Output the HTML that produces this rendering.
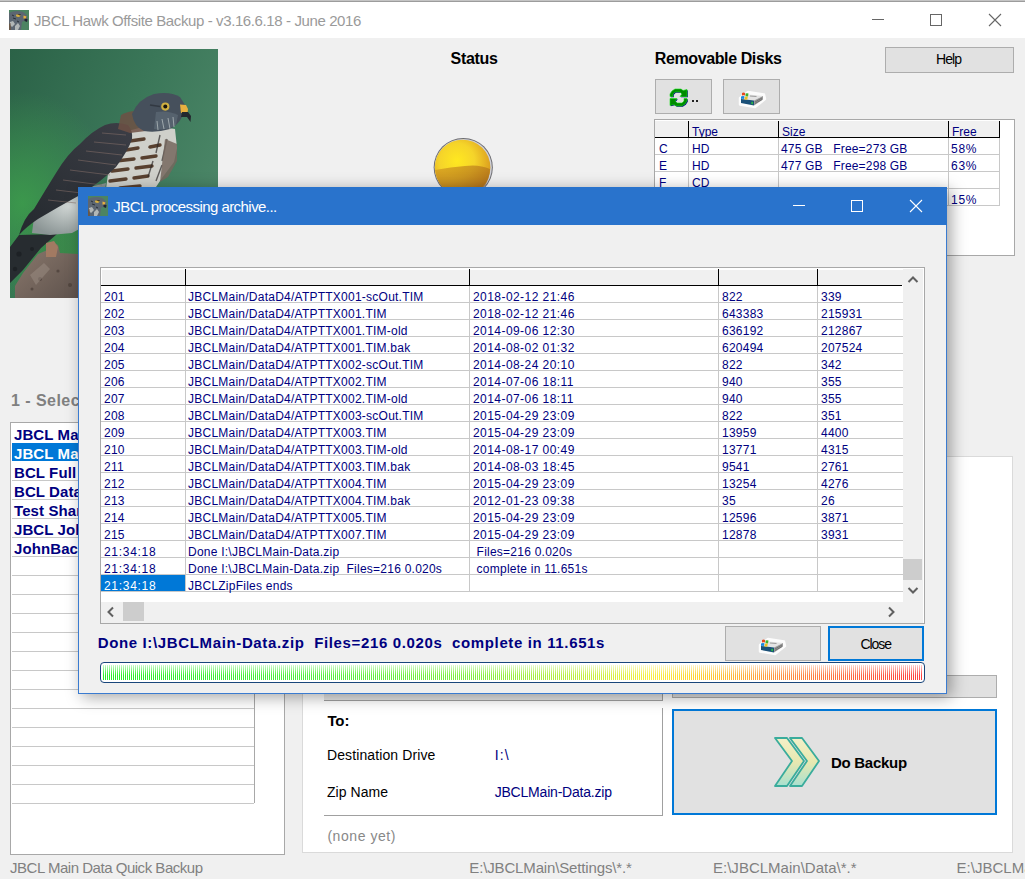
<!DOCTYPE html>
<html><head><meta charset="utf-8">
<style>
*{margin:0;padding:0;box-sizing:border-box}
html,body{width:1025px;height:879px;overflow:hidden;background:#f0f0f0;font-family:"Liberation Sans",sans-serif;position:relative}
.a{position:absolute}
.t{position:absolute;white-space:pre;line-height:1}
</style></head><body>
<div class="a" style="left:0px;top:0px;width:1025px;height:1px;background:#c4c4c4"></div>
<div class="a" style="left:0px;top:1px;width:1025px;height:1px;background:#9c9c9c"></div>
<div class="a" style="left:0px;top:2px;width:1025px;height:36px;background:#fff"></div>
<div class="t" style="left:34.00px;top:13.00px;font-size:15px;color:#9a9a9a;letter-spacing:-0.389px;">JBCL Hawk Offsite Backup - v3.16.6.18 - June 2016</div>
<svg class="a" style="left:9px;top:10px" width="20" height="20"><rect width="20" height="20" fill="#4c8462"/><path d="M0 3 Q5 0.5 11 1.2 Q16 2 18 6 L19 11 L15 11 L13 12 L12 20 L0 20Z" fill="#5c6672"/><path d="M1 12 L4 11 L6 14 L3 17 L1 15Z M6 16 L9 13 L11 16 L9 20 L6 20Z" fill="#c8ccc8" opacity="0.8"/><path d="M0 14 L1.5 13 L2 20 L0 20Z" fill="#6a5848"/><path d="M4 8 L7 9 M8 11 L10 12 M3 5 L5 6" stroke="#2a3038" stroke-width="1"/><ellipse cx="9.2" cy="5.6" rx="2.3" ry="1.3" fill="#d8b040"/><path d="M8 4 L12 4.5 L11 5.5Z" fill="#1a1a1a"/><path d="M14.5 5.5 L17.5 6.5 L16.5 9 L14.5 8.5Z" fill="#e8b040"/><path d="M15.5 8.5 L18.5 9 L18 12 L15.5 11Z" fill="#1e2430"/></svg>
<div class="a" style="left:872px;top:19px;width:12px;height:1px;background:#666"></div>
<div class="a" style="left:930px;top:14px;width:12px;height:12px;border:1px solid #666"></div>
<svg class="a" style="left:988px;top:13px" width="14" height="14"><path d="M1 1L13 13M13 1L1 13" stroke="#666" stroke-width="1.1"/></svg>
<svg class="a" style="left:10px;top:49px" width="208" height="249" viewBox="0 0 208 249">
<defs>
<linearGradient id="hg" x1="0" y1="0" x2="1" y2="0.5"><stop offset="0" stop-color="#2b6247"/><stop offset="0.55" stop-color="#3a7658"/><stop offset="1" stop-color="#4a8566"/></linearGradient>
<radialGradient id="hg2" cx="0.06" cy="0.62" r="0.45"><stop offset="0" stop-color="#3c9a4c" stop-opacity="0.95"/><stop offset="1" stop-color="#3c9a4c" stop-opacity="0"/></radialGradient>
<radialGradient id="hg4" cx="0.28" cy="0.85" r="0.3"><stop offset="0" stop-color="#3a8a46" stop-opacity="0.8"/><stop offset="1" stop-color="#3a8a46" stop-opacity="0"/></radialGradient>
<linearGradient id="wg" x1="1" y1="0" x2="0" y2="1"><stop offset="0" stop-color="#3c3e46"/><stop offset="1" stop-color="#24292e"/></linearGradient>
<linearGradient id="br" x1="0" y1="0" x2="1" y2="1"><stop offset="0" stop-color="#8c7a6e"/><stop offset="1" stop-color="#5e524c"/></linearGradient>
<radialGradient id="bel" cx="0.5" cy="0.45" r="0.6"><stop offset="0" stop-color="#d0d6d4"/><stop offset="1" stop-color="#8a9494"/></radialGradient>
</defs>
<rect width="208" height="249" fill="url(#hg)"/>
<rect width="208" height="249" fill="url(#hg2)"/>
<rect width="208" height="249" fill="url(#hg4)"/>
<!-- tail -->
<path d="M0 198 L9 186 L47 185 L31 199 L13 221 L0 234Z" fill="#272c30"/>
<g fill="#15181b" opacity="0.5"><circle cx="9" cy="205" r="2.6"/><circle cx="22" cy="200" r="2"/><circle cx="5" cy="220" r="2.2"/></g>
<!-- belly/flank -->
<path d="M24 168 Q34 152 56 146 L80 138 L96 134 L92 158 Q80 176 62 184 L40 186 L22 184Z" fill="url(#bel)"/>
<!-- chest -->
<path d="M118 82 L140 76 L165 80 L167 99 L164 113 L152 129 L146 138 L118 142 L96 140 L100 110Z" fill="#cfd0ca"/>
<g stroke="#58402f" stroke-width="3.4" fill="none" stroke-linecap="round">
<path d="M120 92 L134 90"/><path d="M110 102 L128 99"/><path d="M140 98 L150 96"/><path d="M106 112 L124 110"/><path d="M132 109 L146 107"/><path d="M102 122 L118 120"/><path d="M126 119 L142 117"/><path d="M100 132 L116 130"/><path d="M124 129 L138 127"/><path d="M110 139 L130 137"/>
</g>
<g stroke="#2e2a2a" stroke-width="1.4" fill="none" opacity="0.7">
<path d="M150 86 L146 104"/><path d="M157 90 L152 112"/><path d="M143 112 L138 128"/><path d="M152 116 L146 132"/>
</g>
<path d="M155 90 L167 95 L167 112 L158 128 L150 133 Z" fill="#76675e" opacity="0.85"/>
<!-- wing -->
<path d="M95 76 Q106 72 118 76 Q123 82 122 90 Q118 102 106 118 Q92 132 70 146 Q48 158 28 170 Q16 178 9 186 Q14 168 24 160 Q36 140 46 124 Q58 104 70 95 Q82 82 95 76Z" fill="url(#wg)"/>
<g stroke="#86706a" stroke-width="1" opacity="0.55">
<path d="M92 84 L116 86"/><path d="M84 93 L116 96"/><path d="M76 102 L112 106"/><path d="M68 111 L106 116"/><path d="M60 121 L100 126"/><path d="M53 131 L92 136"/><path d="M46 141 L80 145"/><path d="M38 151 L66 154"/>
</g>
<!-- nape -->
<path d="M111 66 Q122 60 132 63 L136 82 L120 84 L108 80Z" fill="#6e5044" opacity="0.85"/>
<!-- head -->
<path d="M122 65 Q128 50 144 45 Q160 42 170 48 L175 56 L172 68 Q168 76 160 80 Q146 84 134 82 Q124 78 122 65Z" fill="#46505c"/>
<path d="M146 63 Q158 61 168 66 L166 76 Q156 82 144 80Z" fill="#56626e"/>
<g stroke="#c8d0d0" stroke-width="0.9" opacity="0.7"><path d="M152 70 L154 80"/><path d="M158 69 L160 80"/><path d="M147 72 L148 81"/><path d="M163 68 L164 78"/></g>
<path d="M140 56 L150 57.5" stroke="#2a3038" stroke-width="1.6" opacity="0.7"/>
<circle cx="155.3" cy="57.6" r="4.1" fill="#d0b040"/><circle cx="155.3" cy="57.6" r="2" fill="#18140e"/>
<path d="M170 55.5 L176 56 L178 60 L177.5 64 L171 64Z" fill="#e8b040"/>
<path d="M172 63 L178 63 L181 67 L180.5 73 L177 68 L171 68Z" fill="#23282e"/>
<!-- branch -->
<path d="M5 249 L5 237 L13 224 L28 205 L40 200 L42 193 L48 196 L50 204 L68 205 L68 249Z" fill="url(#br)"/>
<path d="M36 194 L44 192 L48 198 L46 208 L36 208Z" fill="#a27a62"/>
<g fill="#4a3e38" opacity="0.7"><circle cx="30" cy="230" r="2"/><circle cx="48" cy="222" r="1.6"/><circle cx="22" cy="240" r="1.5"/><circle cx="60" cy="236" r="2"/></g>
<path d="M20 226 L34 214 L40 220 L26 236Z" fill="#9c8e84" opacity="0.5"/>
</svg>

<div class="t" style="left:450.60px;top:51.00px;font-size:16px;color:#000;font-weight:bold;letter-spacing:-0.312px;">Status</div>
<svg class="a" style="left:431px;top:136px" width="64" height="64"><defs>
<radialGradient id="bl" cx="0.4" cy="0.38" r="0.7"><stop offset="0" stop-color="#ffe820"/><stop offset="0.45" stop-color="#f5d42a"/><stop offset="0.8" stop-color="#e0a820"/><stop offset="1" stop-color="#c89020"/></radialGradient>
<linearGradient id="bs" x1="0" y1="0" x2="1" y2="1"><stop offset="0" stop-color="#d8a020"/><stop offset="1" stop-color="#9a5818"/></linearGradient></defs>
<circle cx="32.25" cy="31.5" r="29.6" fill="#6c6c70"/><circle cx="32.25" cy="31.5" r="28.6" fill="#d0d0d8"/><circle cx="31.6" cy="31.5" r="27.8" fill="url(#bl)"/>
<path d="M4 34 Q20 31 34 30 Q48 28 59 33 Q58 50 46 57 Q32 62 18 57 Q6 50 4 34Z" fill="url(#bs)" opacity="0.75"/></svg>
<div class="t" style="left:654.80px;top:51.00px;font-size:16px;color:#000;font-weight:bold;letter-spacing:-0.391px;">Removable Disks</div>
<div class="a" style="left:885px;top:47px;width:129px;height:26px;background:#e1e1e1;border:1px solid #adadad"></div>
<div class="t" style="left:936.00px;top:52.00px;font-size:14px;color:#000;letter-spacing:-0.947px;">Help</div>
<div class="a" style="left:655px;top:79px;width:57px;height:35px;background:#e1e1e1;border:1px solid #adadad"></div>
<div class="a" style="left:723px;top:79px;width:57px;height:35px;background:#e1e1e1;border:1px solid #adadad"></div>
<svg class="a" style="left:669px;top:88px" width="20" height="20" viewBox="0 0 20 20">
<g transform="translate(0.8,0.8)" fill="#000080">
<path d="M1,8.5 L1,6 L3,3 L6,1 L12,1 L14,2.5 L18,1.5 L18,8.5 L11,8.5 L13,6 L11,4 L6,4 L4,6 L4,8.5 Z"/>
<path d="M18,10.5 L18,13 L16,16 L13,18 L7,18 L5,16.5 L1,17.5 L1,10.5 L8,10.5 L6,13 L8,15 L13,15 L15,13 L15,10.5 Z"/></g>
<g fill="#008a00" stroke="#10e010" stroke-width="0.6">
<path d="M1,8.5 L1,6 L3,3 L6,1 L12,1 L14,2.5 L18,1.5 L18,8.5 L11,8.5 L13,6 L11,4 L6,4 L4,6 L4,8.5 Z"/>
<path d="M18,10.5 L18,13 L16,16 L13,18 L7,18 L5,16.5 L1,17.5 L1,10.5 L8,10.5 L6,13 L8,15 L13,15 L15,13 L15,10.5 Z"/></g>
</svg>
<div class="a" style="left:692px;top:100px;width:2px;height:2px;background:#222"></div>
<div class="a" style="left:696px;top:100px;width:2px;height:2px;background:#222"></div>
<svg class="a" style="left:735px;top:88px" width="35" height="24" viewBox="0 0 35 24">
<path d="M5 10 L13 4 L29 6.5 L30 11 L20 19 L5 16.5Z" fill="#fff" stroke="#fff" stroke-width="2.5" stroke-linejoin="round" opacity="0.9"/>
<path d="M14 6.5 L28 8 L19 12.5 L6 11Z" fill="#e4e4e4"/>
<path d="M15 7.5 L22 8 L21 9 L15 8.5Z" fill="#707070" opacity="0.6"/>
<path d="M6 11 L19 12.5 L19 17.5 L6 15Z" fill="#1a5078"/>
<path d="M19 12.5 L28 8 L28 11.5 L19 17.5Z" fill="#9a9a9a"/>
<path d="M20 14 L27 10 M20 15.5 L27 11.5" stroke="#555" stroke-width="0.6"/>
<rect x="16.5" y="13.8" width="1.2" height="2.4" fill="#30e030"/>
<path d="M7 5 Q8.5 4 10 5 L10 7.5 Q8.5 6.8 7 7.5Z" fill="#e84820"/>
<path d="M10.5 5.5 Q12 4.8 13.5 5.5 L13 8.5 Q11.5 8 10.5 8.5Z" fill="#40b030"/>
<path d="M6 8.5 Q7.5 7.5 9.5 8.2 L9 11 Q7.5 10.5 6 11Z" fill="#1a88e0"/>
<path d="M9.8 9 Q11.2 8.3 12.8 8.8 L12.2 11.8 Q10.8 11.2 9.5 11.8Z" fill="#f0c020"/>
</svg>
<div class="a" style="left:654px;top:119px;width:361px;height:137px;background:#fff;border:1px solid #a8a8a8"></div>
<div class="a" style="left:655px;top:121px;width:344px;height:16px;background:#f0f0f0"></div>
<div class="a" style="left:655px;top:137px;width:344px;height:1px;background:#000"></div>
<div class="a" style="left:688px;top:121px;width:1px;height:17px;background:#000"></div>
<div class="a" style="left:778px;top:121px;width:1px;height:17px;background:#000"></div>
<div class="a" style="left:948px;top:121px;width:1px;height:17px;background:#000"></div>
<div class="a" style="left:999px;top:121px;width:1px;height:17px;background:#000"></div>
<div class="a" style="left:655px;top:154px;width:344px;height:1px;background:#c8c8c8"></div>
<div class="a" style="left:655px;top:171px;width:344px;height:1px;background:#c8c8c8"></div>
<div class="a" style="left:655px;top:188px;width:344px;height:1px;background:#c8c8c8"></div>
<div class="a" style="left:655px;top:205px;width:344px;height:1px;background:#c8c8c8"></div>
<div class="a" style="left:688px;top:138px;width:1px;height:68px;background:#c8c8c8"></div>
<div class="a" style="left:778px;top:138px;width:1px;height:68px;background:#c8c8c8"></div>
<div class="a" style="left:948px;top:138px;width:1px;height:68px;background:#c8c8c8"></div>
<div class="a" style="left:999px;top:138px;width:1px;height:68px;background:#c8c8c8"></div>
<div class="a" style="left:655px;top:121px;width:344px;height:16px;overflow:hidden">
<div class="t" style="left:37.00px;top:5.00px;font-size:12px;color:#000080;">Type</div>
<div class="t" style="left:127.00px;top:5.00px;font-size:12px;color:#000080;">Size</div>
<div class="t" style="left:297.00px;top:5.00px;font-size:12px;color:#000080;">Free</div>
</div>
<div class="t" style="left:659.00px;top:143.00px;font-size:12px;color:#000080;">C</div>
<div class="t" style="left:692.00px;top:143.00px;font-size:12px;color:#000080;">HD</div>
<div class="t" style="left:781.00px;top:143.00px;font-size:12px;color:#000080;letter-spacing:0.173px;">475 GB   Free=273 GB</div>
<div class="t" style="left:951.00px;top:143.00px;font-size:12px;color:#000080;letter-spacing:0.750px;">58%</div>
<div class="t" style="left:659.00px;top:160.00px;font-size:12px;color:#000080;">E</div>
<div class="t" style="left:692.00px;top:160.00px;font-size:12px;color:#000080;">HD</div>
<div class="t" style="left:781.00px;top:160.00px;font-size:12px;color:#000080;letter-spacing:0.173px;">477 GB   Free=298 GB</div>
<div class="t" style="left:951.00px;top:160.00px;font-size:12px;color:#000080;letter-spacing:0.750px;">63%</div>
<div class="t" style="left:659.00px;top:177.00px;font-size:12px;color:#000080;">F</div>
<div class="t" style="left:692.00px;top:177.00px;font-size:12px;color:#000080;">CD</div>
<div class="t" style="left:951.00px;top:194.00px;font-size:12px;color:#000080;letter-spacing:0.750px;">15%</div>
<div class="t" style="left:11.00px;top:393.00px;font-size:16px;color:#808080;font-weight:bold;letter-spacing:0.450px;">1 - Select</div>
<div class="a" style="left:10px;top:422px;width:275px;height:433px;background:#fff;border:1px solid #a8a8a8"></div>
<div class="a" style="left:254px;top:423px;width:1px;height:380px;background:#a8a8a8"></div>
<div class="a" style="left:12px;top:480px;width:242px;height:1px;background:#c8c8c8"></div>
<div class="a" style="left:12px;top:499px;width:242px;height:1px;background:#c8c8c8"></div>
<div class="a" style="left:12px;top:518px;width:242px;height:1px;background:#c8c8c8"></div>
<div class="a" style="left:12px;top:537px;width:242px;height:1px;background:#c8c8c8"></div>
<div class="a" style="left:12px;top:556px;width:242px;height:1px;background:#c8c8c8"></div>
<div class="a" style="left:12px;top:575px;width:242px;height:1px;background:#c8c8c8"></div>
<div class="a" style="left:12px;top:594px;width:242px;height:1px;background:#c8c8c8"></div>
<div class="a" style="left:12px;top:613px;width:242px;height:1px;background:#c8c8c8"></div>
<div class="a" style="left:12px;top:632px;width:242px;height:1px;background:#c8c8c8"></div>
<div class="a" style="left:12px;top:651px;width:242px;height:1px;background:#c8c8c8"></div>
<div class="a" style="left:12px;top:670px;width:242px;height:1px;background:#c8c8c8"></div>
<div class="a" style="left:12px;top:689px;width:242px;height:1px;background:#c8c8c8"></div>
<div class="a" style="left:12px;top:708px;width:242px;height:1px;background:#c8c8c8"></div>
<div class="a" style="left:12px;top:727px;width:242px;height:1px;background:#c8c8c8"></div>
<div class="a" style="left:12px;top:746px;width:242px;height:1px;background:#c8c8c8"></div>
<div class="a" style="left:12px;top:765px;width:242px;height:1px;background:#c8c8c8"></div>
<div class="a" style="left:12px;top:784px;width:242px;height:1px;background:#c8c8c8"></div>
<div class="a" style="left:12px;top:803px;width:242px;height:1px;background:#c8c8c8"></div>
<div class="a" style="left:12px;top:443px;width:242px;height:18px;background:#0078d7"></div>
<div class="t" style="left:14.00px;top:427.00px;font-size:15px;color:#000080;font-weight:bold;letter-spacing:0.100px;">JBCL Main Data Quick Backup</div>
<div class="t" style="left:14.00px;top:446.00px;font-size:15px;color:#fff;font-weight:bold;letter-spacing:0.100px;">JBCL Main Data Full</div>
<div class="t" style="left:14.00px;top:465.00px;font-size:15px;color:#000080;font-weight:bold;letter-spacing:0.100px;">BCL Full Backup</div>
<div class="t" style="left:14.00px;top:484.00px;font-size:15px;color:#000080;font-weight:bold;letter-spacing:0.100px;">BCL Data</div>
<div class="t" style="left:14.00px;top:503.00px;font-size:15px;color:#000080;font-weight:bold;letter-spacing:0.100px;">Test Share</div>
<div class="t" style="left:14.00px;top:522.00px;font-size:15px;color:#000080;font-weight:bold;letter-spacing:0.100px;">JBCL John</div>
<div class="t" style="left:14.00px;top:541.00px;font-size:15px;color:#000080;font-weight:bold;letter-spacing:0.100px;">JohnBackup</div>
<div class="a" style="left:302px;top:456px;width:711px;height:397px;background:#fff;border:1px solid #dadada"></div>
<div class="a" style="left:324px;top:692px;width:339px;height:9px;background:#e8e8e8;border-bottom:1px solid #a0a0a0;border-right:1px solid #a0a0a0"></div>
<div class="a" style="left:672px;top:675px;width:325px;height:23px;background:#e1e1e1;border:1px solid #adadad"></div>
<div class="a" style="left:324px;top:708px;width:339px;height:108px;background:#fff;border-bottom:1px solid #a0a0a0;border-right:1px solid #a0a0a0"></div>
<div class="t" style="left:327.40px;top:713.00px;font-size:15px;color:#000;font-weight:bold;letter-spacing:-0.100px;">To:</div>
<div class="t" style="left:327.00px;top:748.00px;font-size:14px;color:#000;letter-spacing:0.110px;">Destination Drive</div>
<div class="t" style="left:494.70px;top:748.00px;font-size:14px;color:#000080;letter-spacing:1.200px;">I:\</div>
<div class="t" style="left:327.00px;top:785.00px;font-size:14px;color:#000;letter-spacing:0.054px;">Zip Name</div>
<div class="t" style="left:494.70px;top:785.00px;font-size:14px;color:#000080;letter-spacing:-0.203px;">JBCLMain-Data.zip</div>
<div class="t" style="left:327.40px;top:829.00px;font-size:14px;color:#888;letter-spacing:0.556px;">(none yet)</div>
<div class="a" style="left:672px;top:709px;width:325px;height:106px;background:#e1e1e1;border:2px solid #0078d7"></div>
<svg class="a" style="left:770px;top:734px" width="56" height="56" viewBox="0 0 56 56">
<defs><linearGradient id="cg" x1="0" y1="0" x2="0" y2="1"><stop offset="0" stop-color="#f4f0c8"/><stop offset="0.5" stop-color="#e8e8b0"/><stop offset="1" stop-color="#a8e0d0"/></linearGradient></defs>
<path d="M5 4 L17 4 L34 27 L17 52 L5 52 L22 27Z" fill="url(#cg)" stroke="#3aac9c" stroke-width="1.8" stroke-linejoin="round"/>
<path d="M20 4 L32 4 L49 27 L32 52 L20 52 L37 27Z" fill="url(#cg)" stroke="#3aac9c" stroke-width="1.8" stroke-linejoin="round"/></svg>
<div class="t" style="left:831.00px;top:755.00px;font-size:15px;color:#000;font-weight:bold;letter-spacing:-0.287px;">Do Backup</div>
<div class="t" style="left:10.00px;top:860.00px;font-size:15px;color:#808080;letter-spacing:-0.475px;">JBCL Main Data Quick Backup</div>
<div class="t" style="left:469.30px;top:860.00px;font-size:15px;color:#808080;letter-spacing:-0.148px;">E:\JBCLMain\Settings\*.*</div>
<div class="t" style="left:713.00px;top:860.00px;font-size:15px;color:#808080;letter-spacing:0.011px;">E:\JBCLMain\Data\*.*</div>
<div class="t" style="left:956.60px;top:860.00px;font-size:15px;color:#808080;letter-spacing:0.011px;">E:\JBCLMain\Data</div>
<div class="a" style="left:78px;top:187px;width:869px;height:507px;background:#f0f0f0;border:1px solid #3a7bd0;box-shadow:4px 3px 15px rgba(0,0,0,0.36)"></div>
<div class="a" style="left:78px;top:187px;width:869px;height:38px;background:#2973cc"></div>
<svg class="a" style="left:88px;top:196px" width="20" height="20"><rect width="20" height="20" fill="#4c8462"/><path d="M0 3 Q5 0.5 11 1.2 Q16 2 18 6 L19 11 L15 11 L13 12 L12 20 L0 20Z" fill="#5c6672"/><path d="M1 12 L4 11 L6 14 L3 17 L1 15Z M6 16 L9 13 L11 16 L9 20 L6 20Z" fill="#c8ccc8" opacity="0.8"/><path d="M0 14 L1.5 13 L2 20 L0 20Z" fill="#6a5848"/><path d="M4 8 L7 9 M8 11 L10 12 M3 5 L5 6" stroke="#2a3038" stroke-width="1"/><ellipse cx="9.2" cy="5.6" rx="2.3" ry="1.3" fill="#d8b040"/><path d="M8 4 L12 4.5 L11 5.5Z" fill="#1a1a1a"/><path d="M14.5 5.5 L17.5 6.5 L16.5 9 L14.5 8.5Z" fill="#e8b040"/><path d="M15.5 8.5 L18.5 9 L18 12 L15.5 11Z" fill="#1e2430"/></svg>
<div class="t" style="left:113.30px;top:199.00px;font-size:15px;color:#fff;letter-spacing:-0.556px;">JBCL processing archive...</div>
<div class="a" style="left:793px;top:205px;width:12px;height:1px;background:#fff"></div>
<div class="a" style="left:851px;top:200px;width:12px;height:12px;border:1px solid #fff"></div>
<svg class="a" style="left:909px;top:199px" width="14" height="14"><path d="M1 1L13 13M13 1L1 13" stroke="#fff" stroke-width="1.1"/></svg>
<div class="a" style="left:100px;top:267px;width:825px;height:357px;background:#fff;border:1px solid #a8a8a8"></div>
<div class="a" style="left:102px;top:270px;width:801px;height:15px;background:#f0f0f0"></div>
<div class="a" style="left:101px;top:285px;width:801px;height:1px;background:#000"></div>
<div class="a" style="left:185px;top:269px;width:1px;height:16px;background:#000"></div>
<div class="a" style="left:185px;top:286px;width:1px;height:306px;background:#c8c8c8"></div>
<div class="a" style="left:469px;top:269px;width:1px;height:16px;background:#000"></div>
<div class="a" style="left:469px;top:286px;width:1px;height:306px;background:#c8c8c8"></div>
<div class="a" style="left:718px;top:269px;width:1px;height:16px;background:#000"></div>
<div class="a" style="left:718px;top:286px;width:1px;height:306px;background:#c8c8c8"></div>
<div class="a" style="left:817px;top:269px;width:1px;height:16px;background:#000"></div>
<div class="a" style="left:817px;top:286px;width:1px;height:306px;background:#c8c8c8"></div>
<div class="a" style="left:101px;top:302px;width:802px;height:1px;background:#c8c8c8"></div>
<div class="a" style="left:101px;top:319px;width:802px;height:1px;background:#c8c8c8"></div>
<div class="a" style="left:101px;top:336px;width:802px;height:1px;background:#c8c8c8"></div>
<div class="a" style="left:101px;top:353px;width:802px;height:1px;background:#c8c8c8"></div>
<div class="a" style="left:101px;top:370px;width:802px;height:1px;background:#c8c8c8"></div>
<div class="a" style="left:101px;top:387px;width:802px;height:1px;background:#c8c8c8"></div>
<div class="a" style="left:101px;top:404px;width:802px;height:1px;background:#c8c8c8"></div>
<div class="a" style="left:101px;top:421px;width:802px;height:1px;background:#c8c8c8"></div>
<div class="a" style="left:101px;top:438px;width:802px;height:1px;background:#c8c8c8"></div>
<div class="a" style="left:101px;top:455px;width:802px;height:1px;background:#c8c8c8"></div>
<div class="a" style="left:101px;top:472px;width:802px;height:1px;background:#c8c8c8"></div>
<div class="a" style="left:101px;top:489px;width:802px;height:1px;background:#c8c8c8"></div>
<div class="a" style="left:101px;top:506px;width:802px;height:1px;background:#c8c8c8"></div>
<div class="a" style="left:101px;top:523px;width:802px;height:1px;background:#c8c8c8"></div>
<div class="a" style="left:101px;top:540px;width:802px;height:1px;background:#c8c8c8"></div>
<div class="a" style="left:101px;top:557px;width:802px;height:1px;background:#c8c8c8"></div>
<div class="a" style="left:101px;top:574px;width:802px;height:1px;background:#c8c8c8"></div>
<div class="a" style="left:101px;top:591px;width:802px;height:1px;background:#c8c8c8"></div>
<div class="a" style="left:101px;top:575px;width:84px;height:16px;background:#0078d7"></div>
<div class="t" style="left:104.00px;top:291.00px;font-size:12px;color:#000080;letter-spacing:0.240px;">201</div>
<div class="t" style="left:188.00px;top:291.00px;font-size:12px;color:#000080;letter-spacing:0.240px;">JBCLMain/DataD4/ATPTTX001-scOut.TIM</div>
<div class="t" style="left:473.00px;top:291.00px;font-size:12px;color:#000080;letter-spacing:0.440px;">2018-02-12 21:46</div>
<div class="t" style="left:722.00px;top:291.00px;font-size:12px;color:#000080;letter-spacing:0.240px;">822</div>
<div class="t" style="left:821.00px;top:291.00px;font-size:12px;color:#000080;letter-spacing:0.240px;">339</div>
<div class="t" style="left:104.00px;top:308.00px;font-size:12px;color:#000080;letter-spacing:0.240px;">202</div>
<div class="t" style="left:188.00px;top:308.00px;font-size:12px;color:#000080;letter-spacing:0.240px;">JBCLMain/DataD4/ATPTTX001.TIM</div>
<div class="t" style="left:473.00px;top:308.00px;font-size:12px;color:#000080;letter-spacing:0.440px;">2018-02-12 21:46</div>
<div class="t" style="left:722.00px;top:308.00px;font-size:12px;color:#000080;letter-spacing:0.240px;">643383</div>
<div class="t" style="left:821.00px;top:308.00px;font-size:12px;color:#000080;letter-spacing:0.240px;">215931</div>
<div class="t" style="left:104.00px;top:325.00px;font-size:12px;color:#000080;letter-spacing:0.240px;">203</div>
<div class="t" style="left:188.00px;top:325.00px;font-size:12px;color:#000080;letter-spacing:0.240px;">JBCLMain/DataD4/ATPTTX001.TIM-old</div>
<div class="t" style="left:473.00px;top:325.00px;font-size:12px;color:#000080;letter-spacing:0.440px;">2014-09-06 12:30</div>
<div class="t" style="left:722.00px;top:325.00px;font-size:12px;color:#000080;letter-spacing:0.240px;">636192</div>
<div class="t" style="left:821.00px;top:325.00px;font-size:12px;color:#000080;letter-spacing:0.240px;">212867</div>
<div class="t" style="left:104.00px;top:342.00px;font-size:12px;color:#000080;letter-spacing:0.240px;">204</div>
<div class="t" style="left:188.00px;top:342.00px;font-size:12px;color:#000080;letter-spacing:0.240px;">JBCLMain/DataD4/ATPTTX001.TIM.bak</div>
<div class="t" style="left:473.00px;top:342.00px;font-size:12px;color:#000080;letter-spacing:0.440px;">2014-08-02 01:32</div>
<div class="t" style="left:722.00px;top:342.00px;font-size:12px;color:#000080;letter-spacing:0.240px;">620494</div>
<div class="t" style="left:821.00px;top:342.00px;font-size:12px;color:#000080;letter-spacing:0.240px;">207524</div>
<div class="t" style="left:104.00px;top:359.00px;font-size:12px;color:#000080;letter-spacing:0.240px;">205</div>
<div class="t" style="left:188.00px;top:359.00px;font-size:12px;color:#000080;letter-spacing:0.240px;">JBCLMain/DataD4/ATPTTX002-scOut.TIM</div>
<div class="t" style="left:473.00px;top:359.00px;font-size:12px;color:#000080;letter-spacing:0.440px;">2014-08-24 20:10</div>
<div class="t" style="left:722.00px;top:359.00px;font-size:12px;color:#000080;letter-spacing:0.240px;">822</div>
<div class="t" style="left:821.00px;top:359.00px;font-size:12px;color:#000080;letter-spacing:0.240px;">342</div>
<div class="t" style="left:104.00px;top:376.00px;font-size:12px;color:#000080;letter-spacing:0.240px;">206</div>
<div class="t" style="left:188.00px;top:376.00px;font-size:12px;color:#000080;letter-spacing:0.240px;">JBCLMain/DataD4/ATPTTX002.TIM</div>
<div class="t" style="left:473.00px;top:376.00px;font-size:12px;color:#000080;letter-spacing:0.440px;">2014-07-06 18:11</div>
<div class="t" style="left:722.00px;top:376.00px;font-size:12px;color:#000080;letter-spacing:0.240px;">940</div>
<div class="t" style="left:821.00px;top:376.00px;font-size:12px;color:#000080;letter-spacing:0.240px;">355</div>
<div class="t" style="left:104.00px;top:393.00px;font-size:12px;color:#000080;letter-spacing:0.240px;">207</div>
<div class="t" style="left:188.00px;top:393.00px;font-size:12px;color:#000080;letter-spacing:0.240px;">JBCLMain/DataD4/ATPTTX002.TIM-old</div>
<div class="t" style="left:473.00px;top:393.00px;font-size:12px;color:#000080;letter-spacing:0.440px;">2014-07-06 18:11</div>
<div class="t" style="left:722.00px;top:393.00px;font-size:12px;color:#000080;letter-spacing:0.240px;">940</div>
<div class="t" style="left:821.00px;top:393.00px;font-size:12px;color:#000080;letter-spacing:0.240px;">355</div>
<div class="t" style="left:104.00px;top:410.00px;font-size:12px;color:#000080;letter-spacing:0.240px;">208</div>
<div class="t" style="left:188.00px;top:410.00px;font-size:12px;color:#000080;letter-spacing:0.240px;">JBCLMain/DataD4/ATPTTX003-scOut.TIM</div>
<div class="t" style="left:473.00px;top:410.00px;font-size:12px;color:#000080;letter-spacing:0.440px;">2015-04-29 23:09</div>
<div class="t" style="left:722.00px;top:410.00px;font-size:12px;color:#000080;letter-spacing:0.240px;">822</div>
<div class="t" style="left:821.00px;top:410.00px;font-size:12px;color:#000080;letter-spacing:0.240px;">351</div>
<div class="t" style="left:104.00px;top:427.00px;font-size:12px;color:#000080;letter-spacing:0.240px;">209</div>
<div class="t" style="left:188.00px;top:427.00px;font-size:12px;color:#000080;letter-spacing:0.240px;">JBCLMain/DataD4/ATPTTX003.TIM</div>
<div class="t" style="left:473.00px;top:427.00px;font-size:12px;color:#000080;letter-spacing:0.440px;">2015-04-29 23:09</div>
<div class="t" style="left:722.00px;top:427.00px;font-size:12px;color:#000080;letter-spacing:0.240px;">13959</div>
<div class="t" style="left:821.00px;top:427.00px;font-size:12px;color:#000080;letter-spacing:0.240px;">4400</div>
<div class="t" style="left:104.00px;top:444.00px;font-size:12px;color:#000080;letter-spacing:0.240px;">210</div>
<div class="t" style="left:188.00px;top:444.00px;font-size:12px;color:#000080;letter-spacing:0.240px;">JBCLMain/DataD4/ATPTTX003.TIM-old</div>
<div class="t" style="left:473.00px;top:444.00px;font-size:12px;color:#000080;letter-spacing:0.440px;">2014-08-17 00:49</div>
<div class="t" style="left:722.00px;top:444.00px;font-size:12px;color:#000080;letter-spacing:0.240px;">13771</div>
<div class="t" style="left:821.00px;top:444.00px;font-size:12px;color:#000080;letter-spacing:0.240px;">4315</div>
<div class="t" style="left:104.00px;top:461.00px;font-size:12px;color:#000080;letter-spacing:0.240px;">211</div>
<div class="t" style="left:188.00px;top:461.00px;font-size:12px;color:#000080;letter-spacing:0.240px;">JBCLMain/DataD4/ATPTTX003.TIM.bak</div>
<div class="t" style="left:473.00px;top:461.00px;font-size:12px;color:#000080;letter-spacing:0.440px;">2014-08-03 18:45</div>
<div class="t" style="left:722.00px;top:461.00px;font-size:12px;color:#000080;letter-spacing:0.240px;">9541</div>
<div class="t" style="left:821.00px;top:461.00px;font-size:12px;color:#000080;letter-spacing:0.240px;">2761</div>
<div class="t" style="left:104.00px;top:478.00px;font-size:12px;color:#000080;letter-spacing:0.240px;">212</div>
<div class="t" style="left:188.00px;top:478.00px;font-size:12px;color:#000080;letter-spacing:0.240px;">JBCLMain/DataD4/ATPTTX004.TIM</div>
<div class="t" style="left:473.00px;top:478.00px;font-size:12px;color:#000080;letter-spacing:0.440px;">2015-04-29 23:09</div>
<div class="t" style="left:722.00px;top:478.00px;font-size:12px;color:#000080;letter-spacing:0.240px;">13254</div>
<div class="t" style="left:821.00px;top:478.00px;font-size:12px;color:#000080;letter-spacing:0.240px;">4276</div>
<div class="t" style="left:104.00px;top:495.00px;font-size:12px;color:#000080;letter-spacing:0.240px;">213</div>
<div class="t" style="left:188.00px;top:495.00px;font-size:12px;color:#000080;letter-spacing:0.240px;">JBCLMain/DataD4/ATPTTX004.TIM.bak</div>
<div class="t" style="left:473.00px;top:495.00px;font-size:12px;color:#000080;letter-spacing:0.440px;">2012-01-23 09:38</div>
<div class="t" style="left:722.00px;top:495.00px;font-size:12px;color:#000080;letter-spacing:0.240px;">35</div>
<div class="t" style="left:821.00px;top:495.00px;font-size:12px;color:#000080;letter-spacing:0.240px;">26</div>
<div class="t" style="left:104.00px;top:512.00px;font-size:12px;color:#000080;letter-spacing:0.240px;">214</div>
<div class="t" style="left:188.00px;top:512.00px;font-size:12px;color:#000080;letter-spacing:0.240px;">JBCLMain/DataD4/ATPTTX005.TIM</div>
<div class="t" style="left:473.00px;top:512.00px;font-size:12px;color:#000080;letter-spacing:0.440px;">2015-04-29 23:09</div>
<div class="t" style="left:722.00px;top:512.00px;font-size:12px;color:#000080;letter-spacing:0.240px;">12596</div>
<div class="t" style="left:821.00px;top:512.00px;font-size:12px;color:#000080;letter-spacing:0.240px;">3871</div>
<div class="t" style="left:104.00px;top:529.00px;font-size:12px;color:#000080;letter-spacing:0.240px;">215</div>
<div class="t" style="left:188.00px;top:529.00px;font-size:12px;color:#000080;letter-spacing:0.240px;">JBCLMain/DataD4/ATPTTX007.TIM</div>
<div class="t" style="left:473.00px;top:529.00px;font-size:12px;color:#000080;letter-spacing:0.440px;">2015-04-29 23:09</div>
<div class="t" style="left:722.00px;top:529.00px;font-size:12px;color:#000080;letter-spacing:0.240px;">12878</div>
<div class="t" style="left:821.00px;top:529.00px;font-size:12px;color:#000080;letter-spacing:0.240px;">3931</div>
<div class="t" style="left:104.00px;top:546.00px;font-size:12px;color:#000080;letter-spacing:0.700px;">21:34:18</div>
<div class="t" style="left:188.00px;top:546.00px;font-size:12px;color:#000080;letter-spacing:0.240px;">Done I:\JBCLMain-Data.zip</div>
<div class="t" style="left:473.00px;top:546.00px;font-size:12px;color:#000080;letter-spacing:0.240px;"> Files=216 0.020s</div>
<div class="t" style="left:104.00px;top:563.00px;font-size:12px;color:#000080;letter-spacing:0.700px;">21:34:18</div>
<div class="t" style="left:188.00px;top:563.00px;font-size:12px;color:#000080;letter-spacing:0.240px;">Done I:\JBCLMain-Data.zip  Files=216 0.020s</div>
<div class="t" style="left:473.00px;top:563.00px;font-size:12px;color:#000080;letter-spacing:0.240px;"> complete in 11.651s</div>
<div class="t" style="left:104.00px;top:580.00px;font-size:12px;color:#fff;letter-spacing:0.700px;">21:34:18</div>
<div class="t" style="left:188.00px;top:580.00px;font-size:12px;color:#000080;letter-spacing:0.240px;">JBCLZipFiles ends</div>
<div class="a" style="left:903px;top:269px;width:20px;height:333px;background:#f0f0f0"></div>
<div class="a" style="left:101px;top:602px;width:822px;height:21px;background:#f0f0f0"></div>
<div class="a" style="left:903px;top:559px;width:19px;height:21px;background:#cdcdcd"></div>
<div class="a" style="left:123px;top:602px;width:21px;height:19px;background:#cdcdcd"></div>
<svg class="a" style="left:906px;top:275px" width="14" height="10"><path d="M2.5 7 L7 2.5 L11.5 7" fill="none" stroke="#606060" stroke-width="2"/></svg>
<svg class="a" style="left:906px;top:585px" width="14" height="10"><path d="M2.5 3 L7 7.5 L11.5 3" fill="none" stroke="#606060" stroke-width="2"/></svg>
<svg class="a" style="left:106px;top:605px" width="10" height="14"><path d="M7 2.5 L2.5 7 L7 11.5" fill="none" stroke="#606060" stroke-width="2"/></svg>
<svg class="a" style="left:886px;top:605px" width="10" height="14"><path d="M3 2.5 L7.5 7 L3 11.5" fill="none" stroke="#606060" stroke-width="2"/></svg>
<div class="t" style="left:97.70px;top:635.00px;font-size:15px;color:#000080;font-weight:bold;letter-spacing:0.640px;">Done I:\JBCLMain-Data.zip  Files=216 0.020s  complete in 11.651s</div>
<div class="a" style="left:725px;top:626px;width:96px;height:35px;background:#e1e1e1;border:1px solid #adadad"></div>
<svg class="a" style="left:755px;top:635px" width="35" height="24" viewBox="0 0 35 24">
<path d="M5 10 L13 4 L29 6.5 L30 11 L20 19 L5 16.5Z" fill="#fff" stroke="#fff" stroke-width="2.5" stroke-linejoin="round" opacity="0.9"/>
<path d="M14 6.5 L28 8 L19 12.5 L6 11Z" fill="#e4e4e4"/>
<path d="M15 7.5 L22 8 L21 9 L15 8.5Z" fill="#707070" opacity="0.6"/>
<path d="M6 11 L19 12.5 L19 17.5 L6 15Z" fill="#1a5078"/>
<path d="M19 12.5 L28 8 L28 11.5 L19 17.5Z" fill="#9a9a9a"/>
<path d="M20 14 L27 10 M20 15.5 L27 11.5" stroke="#555" stroke-width="0.6"/>
<rect x="16.5" y="13.8" width="1.2" height="2.4" fill="#30e030"/>
<path d="M7 5 Q8.5 4 10 5 L10 7.5 Q8.5 6.8 7 7.5Z" fill="#e84820"/>
<path d="M10.5 5.5 Q12 4.8 13.5 5.5 L13 8.5 Q11.5 8 10.5 8.5Z" fill="#40b030"/>
<path d="M6 8.5 Q7.5 7.5 9.5 8.2 L9 11 Q7.5 10.5 6 11Z" fill="#1a88e0"/>
<path d="M9.8 9 Q11.2 8.3 12.8 8.8 L12.2 11.8 Q10.8 11.2 9.5 11.8Z" fill="#f0c020"/>
</svg>
<div class="a" style="left:828px;top:626px;width:96px;height:35px;background:#e1e1e1;border:2px solid #0078d7"></div>
<div class="t" style="left:860.50px;top:637.00px;font-size:14px;color:#000;letter-spacing:-1.085px;">Close</div>
<div class="a" style="left:100px;top:662px;width:825px;height:21px;border:1.5px solid #18457a;border-radius:4px;background:#fff;overflow:hidden">
<div class="a" style="left:1.5px;top:1.5px;width:819px;height:15px;background:linear-gradient(90deg,#28f028 0%,#50f040 25%,#80f040 45%,#c8f040 60%,#f8f040 67%,#ffd030 73%,#ff9040 83%,#ff4040 100%)"></div>
<div class="a" style="left:1.5px;top:1.5px;width:819px;height:15px;background:linear-gradient(180deg,rgba(255,255,255,.75),rgba(255,255,255,0) 70%)"></div>
<div class="a" style="left:1.5px;top:1.5px;width:819px;height:15px;background:repeating-linear-gradient(90deg,rgba(255,255,255,0) 0 1px,#fff 1px 2px)"></div>
</div>
</body></html>
